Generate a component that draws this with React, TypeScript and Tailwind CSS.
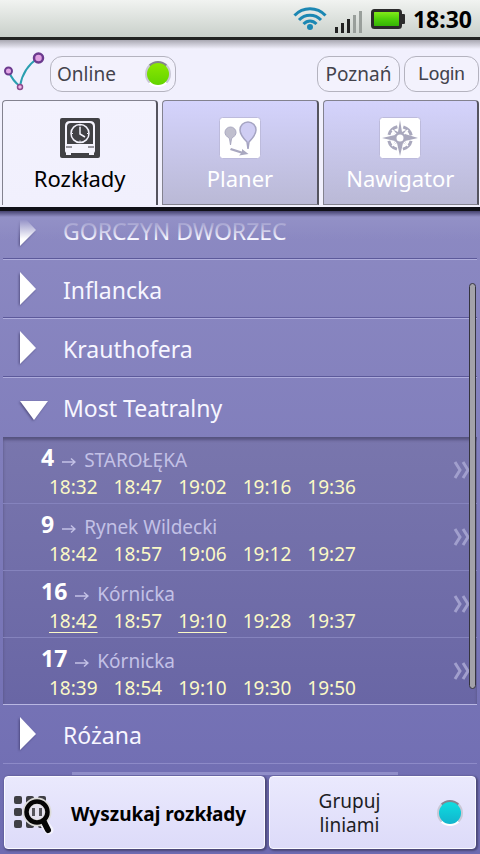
import { useState, type ReactNode } from 'react';

type Departure = { line: string; direction: string; times: string[]; lowFloor?: number[] };
type Stop = { name: string; departures?: Departure[] };

const STOPS: Stop[] = [
  { name: 'GÓRCZYN DWORZEC' },
  { name: 'Inflancka' },
  { name: 'Krauthofera' },
  {
    name: 'Most Teatralny',
    departures: [
      { line: '4', direction: 'STAROŁĘKA', times: ['18:32', '18:47', '19:02', '19:16', '19:36'] },
      { line: '9', direction: 'Rynek Wildecki', times: ['18:42', '18:57', '19:06', '19:12', '19:27'] },
      { line: '16', direction: 'Kórnicka', times: ['18:42', '18:57', '19:10', '19:28', '19:37'], lowFloor: [0, 2] },
      { line: '17', direction: 'Kórnicka', times: ['18:39', '18:54', '19:10', '19:30', '19:50'] },
    ],
  },
  { name: 'Różana' },
];

/* Icons */

function WifiIcon() {
  return (
    <svg width="34" height="24" viewBox="0 0 34 24" fill="none" stroke="#1b87b3" strokeWidth="3">
      <path d="M1.500 8.500C10 -.500 24 -.500 32.500 8.500" />
      <path d="M6 13C12 6.500 22 6.500 28 13" />
      <path d="M10.500 17C14.500 13 19.500 13 23.500 17" />
      <circle cx="17" cy="20" r="3" fill="#1b87b3" stroke="none" />
    </svg>
  );
}

function SignalIcon() {
  return (
    <svg width="28" height="22" viewBox="0 0 28 22">
      <rect x="0" y="16" width="3" height="6" fill="#222" />
      <rect x="6" y="12" width="3" height="10" fill="#222" />
      <rect x="12" y="8" width="3" height="14" fill="#222" />
      <rect x="18" y="4" width="3" height="18" fill="#999f9b" />
      <rect x="24" y="0" width="3" height="22" fill="#999f9b" />
    </svg>
  );
}

function BatteryIcon() {
  return (
    <svg width="34" height="20" viewBox="0 0 34 20">
      <defs>
        <linearGradient id="battery" x1="0" y1="0" x2="0" y2="1">
          <stop offset="0" stopColor="#8df01c" />
          <stop offset=".5" stopColor="#4fd00a" />
          <stop offset="1" stopColor="#2fae04" />
        </linearGradient>
      </defs>
      <rect x="29" y="5" width="5" height="10" rx="1" fill="#2b2b2b" />
      <rect x="1.500" y="1.500" width="28" height="17" rx="2" fill="url(#battery)" stroke="#2b2b2b" strokeWidth="3" />
    </svg>
  );
}

function LogoIcon() {
  return (
    <svg width="42" height="40" viewBox="0 0 42 40" fill="none">
      <path d="M4 18C7 25 11 31 16 34C18 22 25 12 34 6" stroke="#2a9fb0" strokeWidth="2" />
      <circle cx="4.500" cy="19" r="3.500" fill="#e3a6e6" stroke="#6b3a8e" strokeWidth="2" />
      <circle cx="16" cy="35" r="2.500" fill="#f0b6e6" stroke="#8c4a8e" strokeWidth="1.500" />
      <circle cx="34.500" cy="6" r="4.500" fill="#e0a0e2" stroke="#6b3a8e" strokeWidth="2.500" />
    </svg>
  );
}

function ScheduleIcon() {
  return (
    <svg width="42" height="42" viewBox="0 0 42 42">
      <rect x="1" y="1" width="40" height="40" rx="2" fill="#414145" />
      <path d="M6 34V9Q6 4 11 4H31Q36 4 36 9V34Q36 36 34 36H8Q6 36 6 34Z" fill="#f4f3fd" />
      <path d="M8 27V10Q8 6 12 6H30Q34 6 34 10V27Z" fill="#414145" />
      <circle cx="21" cy="16.500" r="9" fill="none" stroke="#f4f3fd" strokeWidth="1.500" />
      <path d="M21 10V17L26 20" fill="none" stroke="#f4f3fd" strokeWidth="1.500" />
      <path d="M21 8V9.500M21 23.500V25M12.500 16.500H14M28 16.500H29.500" stroke="#f4f3fd" />
      <path d="M7 30H13M29 30H35" stroke="#77777d" strokeWidth="1.500" />
      <path d="M7 35V38H12V35M30 35V38H35V35" fill="#f4f3fd" />
      <path d="M13 36H29V38H13Z" fill="#414145" />
    </svg>
  );
}

function PlannerIcon() {
  return (
    <svg width="42" height="42" viewBox="0 0 42 42">
      <rect x=".5" y=".5" width="41" height="41" rx="3" fill="#fff" stroke="#bdbbdc" />
      <path d="M11.500 28L10.500 21.500C7.500 19.500 6 17.500 6 15.500A5.500 5.500 0 0 1 17 15.500C17 17.500 15.500 19.500 12.500 21.500Z" fill="#c0bfce" stroke="#a9a8c0" />
      <path d="M29 32L28 25C23 20 21 17 21 13A8 8 0 0 1 37 13C37 17 35 20 30 25Z" fill="#cfcdf3" stroke="#a5a4c2" strokeWidth="1.500" />
      <path d="M12 31L23 34.500L23 32L29.500 37L20 38.500L22 36.500L11 33Z" fill="#a9a8c0" />
    </svg>
  );
}

function CompassIcon() {
  return (
    <svg width="42" height="42" viewBox="0 0 42 42">
      <rect x=".5" y=".5" width="41" height="41" rx="3" fill="#fff" stroke="#bdbbdc" />
      <circle cx="21" cy="21" r="11.500" fill="none" stroke="#a9a8bd" strokeWidth="3" strokeDasharray="12 6.060" strokeDashoffset="-3" />
      <path d="M21 3L23 15L27 13L26 17L39 21L26 24L28 28L24 26L21 39L18 26L14 28L16 24L3 21L16 18L15 13L19 15Z" fill="#a9a8bd" />
      <path d="M13 13L17 17M29 13L25 17M13 29L17 25M29 29L25 25" stroke="#fff" strokeWidth="1.500" />
      <circle cx="21" cy="21" r="3.500" fill="#fff" />
    </svg>
  );
}

function SearchGridIcon() {
  return (
    <svg width="42" height="40" viewBox="0 0 42 40" className="shrink-0">
      {[1, 13, 25].map((y) =>
        [1, 13, 25].map((x) => <rect key={`${x}-${y}`} x={x} y={y} width="8" height="8" rx="2" fill="#3f3f45" />),
      )}
      <path d="M30 27L36 35" stroke="#f4f3fd" strokeWidth="9" strokeLinecap="round" />
      <circle cx="24" cy="17" r="11" fill="#e4e2ee" stroke="#dcdbd8" strokeWidth="7" />
      <path d="M20.500 13V21M27.500 13V21" stroke="#55555a" strokeWidth="3" />
      <circle cx="24" cy="17" r="10.500" fill="none" stroke="#050505" strokeWidth="4.500" />
      <path d="M31 27L35 35" stroke="#050505" strokeWidth="6" strokeLinecap="round" />
    </svg>
  );
}

function Triangle({ open }: { open: boolean }) {
  return (
    <svg width="32" height="36" viewBox="0 0 32 36" className="shrink-0 drop-shadow-[-1px_1px_1px_rgba(50,45,90,0.6)]">
      <path d={open ? 'M3 10H31L17 29Z' : 'M3 0L19 17L3 33Z'} fill="#fff" />
    </svg>
  );
}

function Chevrons() {
  return (
    <svg width="20" height="20" viewBox="0 0 20 20" fill="none" stroke="#a19fcd" strokeWidth="3">
      <path d="M2 2L7 10L2 18M10 2L15 10L10 18" />
    </svg>
  );
}

/* Controls */

function Lamp({ className }: { className: string }) {
  return <span className={`size-[26px] shrink-0 rounded-full border-2 border-t-[#85838f] border-x-[#c9c8d6] border-b-white ${className}`} />;
}

function Pill({ children, className = '' }: { children: ReactNode; className?: string }) {
  return (
    <button type="button" className={`flex h-9 items-center rounded-xl border border-[#b4b3bf] bg-[#f3f2fd] text-[19px] text-[#43434c] ${className}`}>
      {children}
    </button>
  );
}

function Tab({ label, icon, active, onClick }: { label: string; icon: ReactNode; active: boolean; onClick: () => void }) {
  const look = active
    ? 'bg-linear-to-b from-[#f3f2fe] to-[#f1f0fd] text-black'
    : 'border-b bg-linear-to-b from-[#d4d3fc] to-[#bab9d6] text-white';
  return (
    <button
      type="button"
      role="tab"
      aria-selected={active}
      onClick={onClick}
      className={`flex h-[105px] flex-1 flex-col items-center gap-[3px] rounded-t border-t border-r-2 border-l border-[#83828f] border-r-[#55545f] pt-4 text-[22px] leading-8 ${look}`}
    >
      {icon}
      <span>{label}</span>
    </button>
  );
}

function DepartureRow({ line, direction, times, lowFloor = [] }: Departure) {
  return (
    <li className="flex h-[67px] items-center border-b border-[#8583bd] pr-1 pl-[38px] last:border-b-[#b9b7e2]">
      <div className="flex-1 pt-0.5">
        <div className="flex h-8 items-center">
          <span className="mr-2 self-start text-[23px] leading-8 font-bold text-white">{line}</span>
          <span className="flex items-center gap-2 pt-1.5 text-[19px] text-[#c3c1e6]">
            <svg width="14" height="14" viewBox="0 0 14 14" fill="none" stroke="currentColor" strokeWidth="1.500">
              <path d="M0 9H13M9 5.500L13 9L9 12.500" />
            </svg>
            {direction}
          </span>
        </div>
        <div className="flex gap-4 pl-2 text-[19px] leading-7 text-[#fbf9c6]">
          {times.map((time, i) => (
            <span key={time} className={lowFloor.includes(i) ? 'underline decoration-1 underline-offset-4' : ''}>
              {time}
            </span>
          ))}
        </div>
      </div>
      <Chevrons />
    </li>
  );
}

function StopRow({ stop, open, onToggle }: { stop: Stop; open: boolean; onToggle: () => void }) {
  const border = open ? '' : 'border-b border-[#aeacdc] shadow-[inset_0_-1px_0_#5c599a]';
  return (
    <li className="group mx-[3px]">
      <button
        type="button"
        aria-expanded={open}
        onClick={onToggle}
        className={`flex h-[59px] w-full items-center gap-3 pt-0.5 pl-[14px] text-left text-[23px] text-[#f7f6ff] group-last:border-[#8d8ac8] group-last:shadow-none ${border}`}
      >
        <Triangle open={open} />
        <span className="pl-0.5">{stop.name}</span>
      </button>
      {open && stop.departures && (
        <ul className="bg-linear-to-b from-[#7976ad] to-[#6966a5] shadow-[inset_0_3px_3px_#56537f]">
          {stop.departures.map((d) => (
            <DepartureRow key={d.line} {...d} />
          ))}
        </ul>
      )}
    </li>
  );
}

export default function App() {
  const [tab, setTab] = useState(0);
  const [openStop, setOpenStop] = useState('Most Teatralny');
  const [online, setOnline] = useState(true);
  const [grouped, setGrouped] = useState(true);
  const tabs = [
    { label: 'Rozkłady', icon: <ScheduleIcon /> },
    { label: 'Planer', icon: <PlannerIcon /> },
    { label: 'Nawigator', icon: <CompassIcon /> },
  ];

  return (
    <div className="flex min-h-screen flex-col bg-linear-to-b from-[#9794c8] to-[#6e6bb1] font-['Noto_Sans',sans-serif]">
      {/* Status bar */}
      <div className="flex h-10 items-center justify-end gap-2 border-b-3 border-[#222422] bg-linear-to-b from-[#f1f3f1] to-[#c9d0ca] pr-2">
        <WifiIcon />
        <div className="pt-1.5">
          <SignalIcon />
        </div>
        <BatteryIcon />
        <span className="text-[23px] leading-9 font-bold text-black">18:30</span>
      </div>

      {/* Header with tabs */}
      <header className="border-b-4 border-[#101018] bg-[#f1f0fd]">
        <div className="flex items-center gap-1 bg-linear-to-b from-[#a9a8b2] to-[#f1f0fd] to-15% pt-4 pr-px pb-2">
          <div className="-mt-1 pl-1">
            <LogoIcon />
          </div>
          <label className="flex h-9 w-[126px] items-center justify-between rounded-xl border border-[#b4b3bf] bg-[#f3f2fd] pr-1 pl-1.5 text-[19px] text-[#43434c]">
            Online
            <input type="checkbox" className="sr-only" checked={online} onChange={() => setOnline(!online)} />
            <Lamp className={online ? 'bg-linear-to-b from-[#8be800] to-[#62d400]' : 'bg-[#b4b3bf]'} />
          </label>
          <div className="flex-1" />
          <Pill className="w-[83px] justify-center">Poznań</Pill>
          <Pill className="w-[75px] justify-center font-['Liberation_Sans',sans-serif]">Login</Pill>
        </div>
        <div role="tablist" className="flex gap-1 pr-px pb-0.5 pl-0.5">
          {tabs.map((t, i) => (
            <Tab key={t.label} {...t} active={i === tab} onClick={() => setTab(i)} />
          ))}
        </div>
      </header>

      {/* Stops */}
      <main className="relative flex-1 overflow-hidden">
        <ul className="-mt-2.5">
          {STOPS.map((stop) => (
            <StopRow key={stop.name} stop={stop} open={stop.name === openStop} onToggle={() => setOpenStop(stop.name === openStop ? '' : stop.name)} />
          ))}
        </ul>
        <div className="absolute inset-x-0 top-0 h-7 bg-linear-to-b from-[#9290c6] from-30% to-[#9290c6]/0" />
        <div className="absolute inset-x-0 top-0 h-1.5 bg-linear-to-b from-[#45426f] to-[#45426f]/0" />
        <div className="absolute top-[72px] right-1 h-[406px] w-[7px] rounded-full border border-[#35343f] bg-[#a3a2a9]" />
        <div className="absolute bottom-px left-[15%] h-[3px] w-[68%] bg-[#908ec9]" />
      </main>

      {/* Bottom actions */}
      <footer className="flex gap-1 px-1 pb-[5px]">
        <button type="button" className="flex h-[73px] w-[261px] items-center gap-4 rounded border border-[#fafaff] bg-linear-to-b from-[#eae9fd] to-[#dddbf9] pt-1 pl-2 text-[19px] font-bold text-black shadow-[1px_1px_2px_1px_#4b4878]">
          <SearchGridIcon />
          Wyszukaj rozkłady
        </button>
        <label className="flex h-[73px] flex-1 items-center rounded border border-[#fafaff] bg-linear-to-b from-[#eae9fd] to-[#dddbf9] pr-3 text-center text-[19px] leading-6 text-[#1c1c24] shadow-[1px_1px_2px_1px_#4b4878]">
          <span className="flex-1 pr-10 pl-8">Grupuj liniami</span>
          <input type="checkbox" className="sr-only" checked={grouped} onChange={() => setGrouped(!grouped)} />
          <Lamp className={grouped ? 'bg-linear-to-b from-[#0fdde0] to-[#12b4cd]' : 'bg-[#b4b3bf]'} />
        </label>
      </footer>
    </div>
  );
}
